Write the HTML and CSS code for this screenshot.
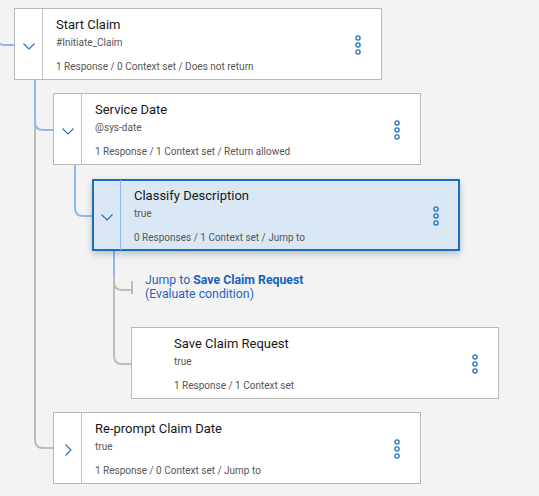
FILE: index.html
```html
<!DOCTYPE html>
<html lang="en">
<head>
<meta charset="utf-8">
<title>Dialog tree</title>
<link rel="stylesheet" href="styles.css">
</head>
<body>
<div class="canvas">
  <svg class="links" width="539" height="496" viewBox="0 0 539 496">
    <g fill="none" stroke-width="2">
      <path class="gray" d="M35 80 L35 440 Q35 448 43 448 L54 448"/>
      <path class="gray" d="M114 276 L114 282 Q114 290 122 290 L132 290 M132 281 L132 294"/>
      <path class="gray" d="M114 276 L114 356 Q114 364 122 364 L132 364"/>
      <path class="blue" d="M-3 30 L-3 37 Q-3 45 5 45 L15 45"/>
      <path class="blue" d="M35 80 L35 122 Q35 130 43 130 L54 130"/>
      <path class="blue" d="M75 165 L75 208 Q75 216 83 216 L93 216"/>
      <path class="blue" d="M114 250 L114 276"/>
    </g>
  </svg>

  <div class="tree">
    <div class="card lvl0">
      <div class="toggle"><svg class="chev-down" width="12" height="7" viewBox="0 0 12 7"><path d="M0.5 0.5 L6 6 L11.5 0.5"/></svg></div>
      <div class="body">
        <div class="title">Start Claim</div>
        <div class="cond">#Initiate_Claim</div>
        <div class="meta">1 Response / 0 Context set / Does not return</div>
      </div>
      <div class="more"><svg width="8" height="20" viewBox="0 0 8 20"><circle cx="4" cy="3" r="2.1"/><circle cx="4" cy="10" r="2.1"/><circle cx="4" cy="17" r="2.1"/></svg></div>
    </div>

    <div class="card lvl1">
      <div class="toggle"><svg class="chev-down" width="12" height="7" viewBox="0 0 12 7"><path d="M0.5 0.5 L6 6 L11.5 0.5"/></svg></div>
      <div class="body">
        <div class="title">Service Date</div>
        <div class="cond">@sys-date</div>
        <div class="meta">1 Response / 1 Context set / Return allowed</div>
      </div>
      <div class="more"><svg width="8" height="20" viewBox="0 0 8 20"><circle cx="4" cy="3" r="2.1"/><circle cx="4" cy="10" r="2.1"/><circle cx="4" cy="17" r="2.1"/></svg></div>
    </div>

    <div class="card lvl2 selected">
      <div class="toggle"><svg class="chev-down" width="12" height="7" viewBox="0 0 12 7"><path d="M0.5 0.5 L6 6 L11.5 0.5"/></svg></div>
      <div class="body">
        <div class="title">Classify Description</div>
        <div class="cond">true</div>
        <div class="meta">0 Responses / 1 Context set / Jump to</div>
      </div>
      <div class="more"><svg width="8" height="20" viewBox="0 0 8 20"><circle cx="4" cy="3" r="2.1"/><circle cx="4" cy="10" r="2.1"/><circle cx="4" cy="17" r="2.1"/></svg></div>
    </div>

    <div class="jump lvl3">
      <div class="jump-line">Jump to <b>Save Claim Request</b></div>
      <div class="jump-line">(Evaluate condition)</div>
    </div>

    <div class="card lvl3">
      <div class="toggle empty"></div>
      <div class="body">
        <div class="title">Save Claim Request</div>
        <div class="cond">true</div>
        <div class="meta">1 Response / 1 Context set</div>
      </div>
      <div class="more"><svg width="8" height="20" viewBox="0 0 8 20"><circle cx="4" cy="3" r="2.1"/><circle cx="4" cy="10" r="2.1"/><circle cx="4" cy="17" r="2.1"/></svg></div>
    </div>

    <div class="card lvl1">
      <div class="toggle"><svg class="chev-right" width="7" height="12" viewBox="0 0 7 12"><path d="M0.5 0.5 L6 6 L0.5 11.5"/></svg></div>
      <div class="body">
        <div class="title">Re-prompt Claim Date</div>
        <div class="cond">true</div>
        <div class="meta">1 Response / 0 Context set / Jump to</div>
      </div>
      <div class="more"><svg width="8" height="20" viewBox="0 0 8 20"><circle cx="4" cy="3" r="2.1"/><circle cx="4" cy="10" r="2.1"/><circle cx="4" cy="17" r="2.1"/></svg></div>
    </div>
  </div>
</div>
</body>
</html>
```

FILE: styles.css
```css
html, body {
  margin: 0;
  padding: 0;
  background: #f3f3f3;
}

body {
  font-family: Roboto, "Liberation Sans", Arial, sans-serif;
  color: #171717;
  overflow: hidden;
}

.canvas {
  position: relative;
  width: 539px;
  height: 496px;
}

.links {
  position: absolute;
  left: 0;
  top: 0;
  z-index: 0;
}

.links .blue { stroke: #8dbbef; }
.links .gray { stroke: #bcbcbc; }

.tree {
  position: relative;
  z-index: 1;
  display: flex;
  flex-direction: column;
  align-items: flex-start;
  gap: 13px;
  padding-top: 8px;
}

.lvl0 { margin-left: 14px; }
.lvl1 { margin-left: 53px; }
.lvl2 { margin-left: 92px; }
.lvl3 { margin-left: 131px; }

.card {
  display: flex;
  box-sizing: border-box;
  width: 368px;
  height: 72px;
  background: #ffffff;
  border: 1px solid #b9b9b9;
}

.card.selected {
  margin-top: 1px;
  background: #dae8f6;
  border-color: #1a6cc2;
  box-shadow: inset 0 0 0 1px #1a6cc2, 0 3px 7px rgba(0, 0, 0, 0.22);
}

.toggle {
  width: 28px;
  flex: none;
  border-right: 1px solid #c4c4c4;
  display: flex;
  align-items: center;
  justify-content: center;
  padding-top: 4px;
  box-sizing: border-box;
}

.selected .toggle {
  border-right-color: #8dbbef;
}

.toggle.empty {
  border-right: none;
  width: 29px;
}

.toggle svg path {
  fill: none;
  stroke: #1f6fc2;
  stroke-width: 1.1;
}

.chev-right {
  margin-left: 2px;
}

.body {
  flex: 1;
  padding-left: 13px;
  padding-top: 8px;
  min-width: 0;
}

.title {
  font-size: 13px;
  line-height: 16px;
  color: #171717;
  white-space: nowrap;
}

.cond {
  margin-top: 4px;
  font-size: 10px;
  line-height: 12px;
  color: #565656;
}

.meta {
  margin-top: 12px;
  font-size: 10px;
  line-height: 12px;
  color: #565656;
  white-space: nowrap;
}

.more {
  flex: none;
  display: flex;
  align-items: center;
  padding-top: 2px;
  margin-right: 19px;
}

.more svg circle {
  fill: none;
  stroke: #1f72c4;
  stroke-width: 1.3;
}

.jump {
  height: 50px;
  box-sizing: border-box;
  padding-top: 9px;
  padding-left: 14px;
  color: #1f66c2;
  font-size: 12.3px;
  line-height: 14px;
}

.jump-line {
  white-space: nowrap;
}

.jump b {
  font-weight: 700;
  color: #1662bd;
}
```
